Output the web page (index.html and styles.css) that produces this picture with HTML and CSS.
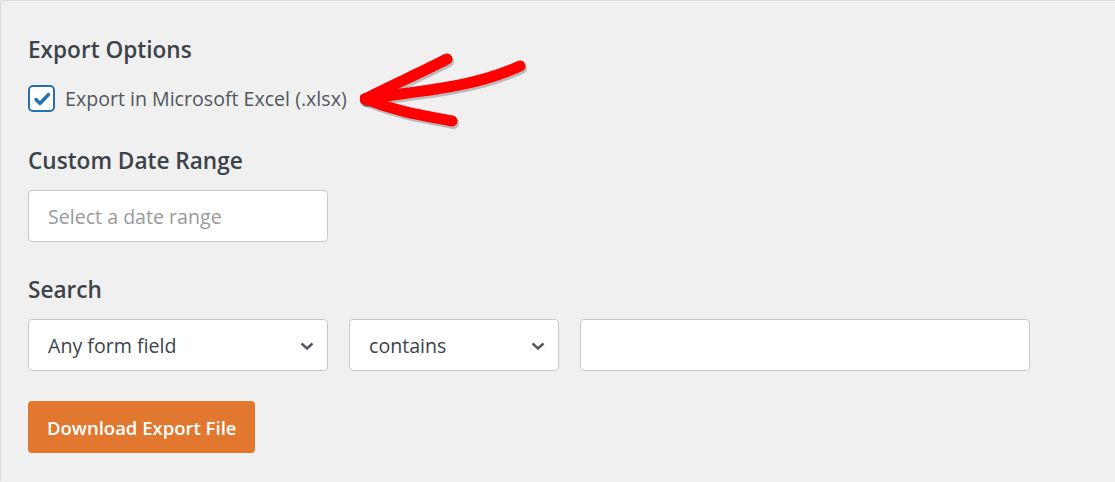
FILE: index.html
```html
<!DOCTYPE html>
<html lang="en">
<head>
    <meta charset="UTF-8">
    <meta name="viewport" content="width=device-width, initial-scale=1.0">
    <title>Export Entries</title>
    <link rel="stylesheet" href="styles.css">
</head>
<body>
    <div id="panel">
        <h2 class="section-title">Export Options</h2>
        <label class="check-row">
            <span class="check-box">
                <svg viewBox="0 0 26 26" width="26" height="26">
                    <path d="M7 13.5 L11 17.5 L19.5 8.5" fill="none" stroke="#2271b1" stroke-width="3.4" stroke-linecap="round" stroke-linejoin="round"/>
                </svg>
            </span>
            <span class="check-label">Export in Microsoft Excel (.xlsx)</span>
        </label>

        <h2 class="section-title title-date">Custom Date Range</h2>
        <input class="field date-field" type="text" placeholder="Select a date range">

        <h2 class="section-title title-search">Search</h2>
        <div class="search-row">
            <div class="select-wrap select-field">
                <select class="field">
                    <option>Any form field</option>
                </select>
                <svg class="chevron" viewBox="0 0 14 8" width="14" height="8">
                    <path d="M1.5 1.5 L7 6.5 L12.5 1.5" fill="none" stroke="#50575e" stroke-width="2.4"/>
                </svg>
            </div>
            <div class="select-wrap select-operator">
                <select class="field">
                    <option>contains</option>
                </select>
                <svg class="chevron" viewBox="0 0 14 8" width="14" height="8">
                    <path d="M1.5 1.5 L7 6.5 L12.5 1.5" fill="none" stroke="#50575e" stroke-width="2.4"/>
                </svg>
            </div>
            <input class="field search-term" type="text">
        </div>

        <button class="download-btn">Download Export File</button>

        <!-- tanda panah merah -->
        <svg class="arrow" viewBox="0 0 200 90" width="200" height="90">
            <g fill="none" stroke-linecap="round" stroke-linejoin="round">
                <g stroke="rgba(0,0,0,0.22)" stroke-width="11" transform="translate(1.5,2.5)">
                    <path d="M5 48 C30 35 60 22 87 8"/>
                    <path d="M5 48 C55 40 110 38 160 15"/>
                    <path d="M5 48 C35 60 60 64 92 70"/>
                </g>
                <g stroke="#ff0000" stroke-width="11">
                    <path d="M5 48 C30 35 60 22 87 8"/>
                    <path d="M5 48 C55 40 110 38 160 15"/>
                    <path d="M5 48 C35 60 60 64 92 70"/>
                </g>
            </g>
        </svg>
    </div>
</body>
</html>
```

FILE: styles.css
```css
/* Halaman dasar */
body {
    margin: 0;
    background-color: #f0f0f0;
    font-family: 'Open Sans', 'Noto Sans', sans-serif;
    color: #3c434a;
}

#panel {
    position: relative;
    min-height: 481px;
    box-sizing: border-box;
    border-top: 1px solid #dcdcdc;
    border-left: 1px solid #dcdcdc;
    padding: 34px 27px 0;
}

/* Judul tiap bagian */
.section-title {
    margin: 0;
    font-size: 22.6px;
    line-height: 30px;
    font-weight: 600;
    color: #3c434a;
}

.title-date {
    margin-top: 34px;
    margin-bottom: 14px;
}

.title-search {
    margin-top: 33px;
    margin-bottom: 14px;
}

/* Checkbox */
.check-row {
    display: flex;
    align-items: center;
    gap: 10px;
    margin-top: 20px;
    height: 27px;
}

.check-box {
    display: flex;
    width: 27px;
    height: 27px;
    box-sizing: border-box;
    border: 2px solid #2271b1;
    border-radius: 5px;
    background-color: #fff;
    align-items: center;
    justify-content: center;
}

.check-box svg {
    flex: none;
}

.check-label {
    font-size: 19.6px;
    color: #50575e;
}

/* Input dan select */
.field {
    display: block;
    height: 52px;
    box-sizing: border-box;
    border: 1px solid #c8c8c8;
    border-radius: 4px;
    background-color: #fff;
    font-family: 'Open Sans', 'Noto Sans', sans-serif;
    font-size: 19.6px;
    color: #3c434a;
    padding: 0 19px;
    margin: 0;
    outline: none;
}

.field::placeholder {
    color: #9a9a9a;
}

.date-field {
    width: 300px;
}

.search-row {
    display: flex;
    gap: 21px;
}

.select-wrap {
    position: relative;
}

.select-wrap select {
    width: 100%;
    appearance: none;
    -webkit-appearance: none;
}

.select-field {
    width: 300px;
}

.select-operator {
    width: 210px;
}

.chevron {
    position: absolute;
    right: 14px;
    top: 23px;
    pointer-events: none;
}

.search-term {
    width: 450px;
}

/* Tombol download */
.download-btn {
    display: block;
    margin-top: 30px;
    height: 52px;
    padding: 0 19px;
    border: none;
    border-radius: 4px;
    background-color: #e27730;
    color: #fff;
    font-family: 'Open Sans', 'Noto Sans', sans-serif;
    font-size: 18.5px;
    font-weight: 600;
    cursor: pointer;
}

.arrow {
    position: absolute;
    left: 359px;
    top: 50px;
}
```
